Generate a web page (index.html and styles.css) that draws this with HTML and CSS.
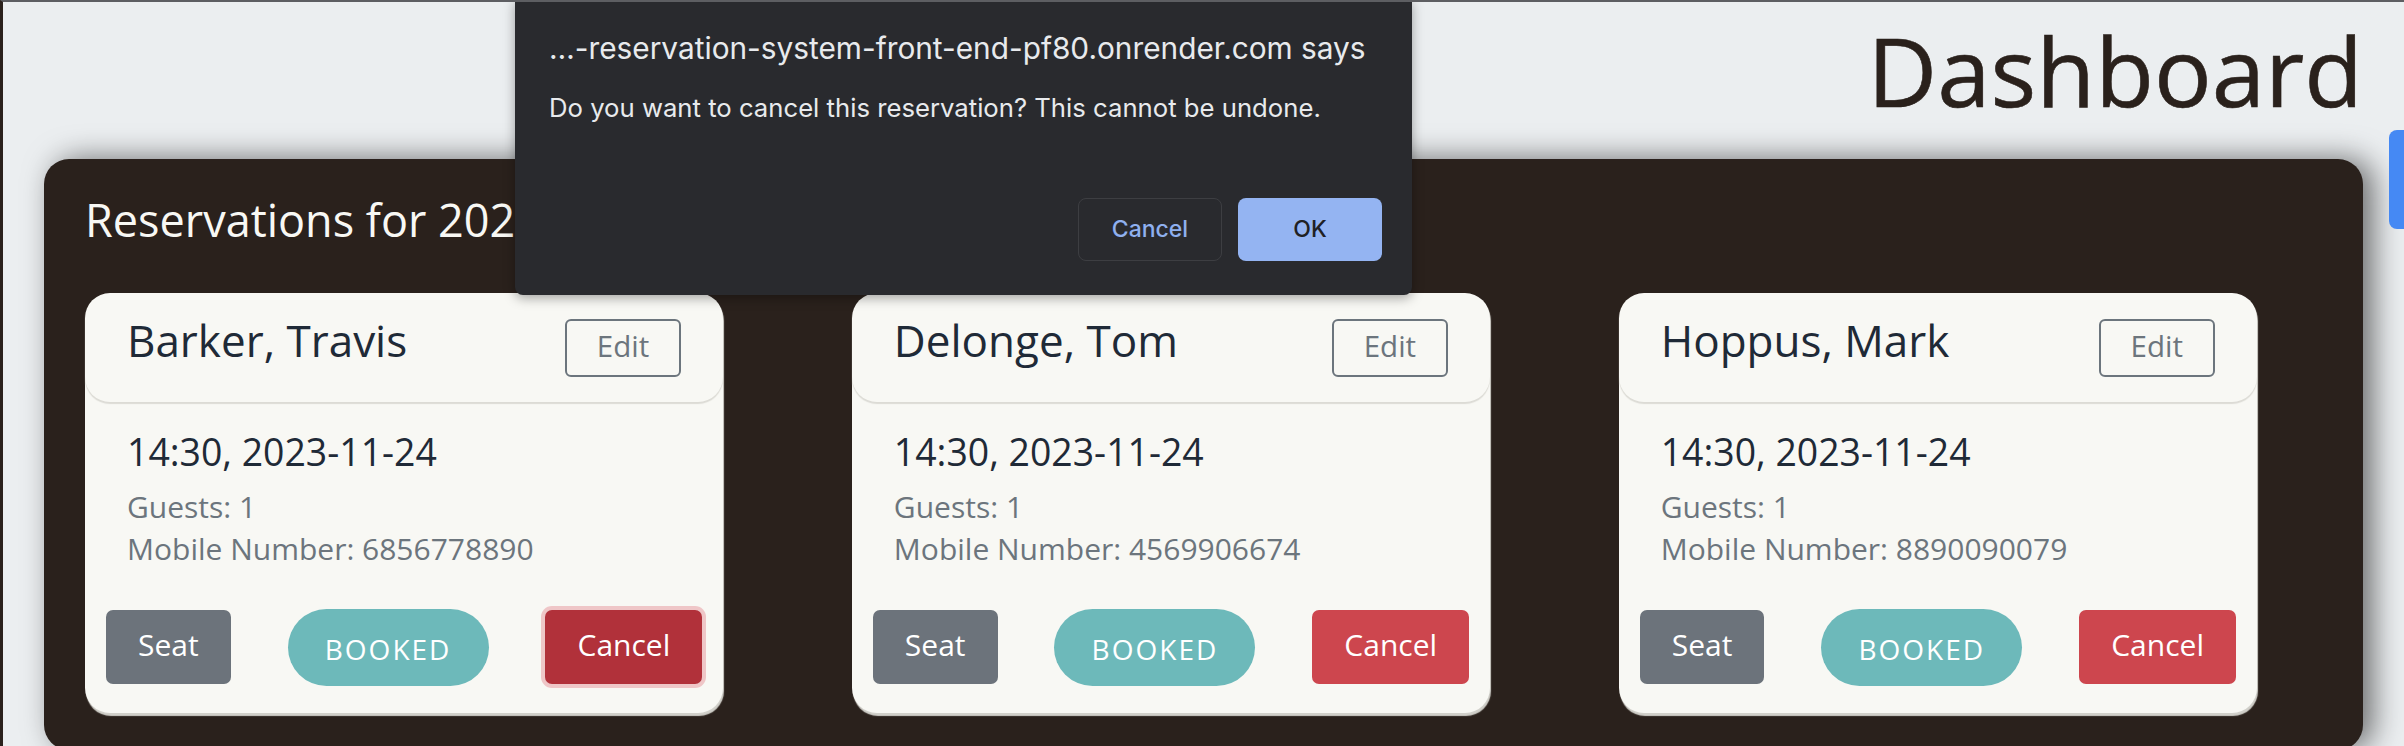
FILE: index.html
```html
<!DOCTYPE html>
<html lang="en">
<head>
<meta charset="utf-8">
<title>Dashboard</title>
<link rel="stylesheet" href="styles.css">
</head>
<body>
<main class="page">
  <h1 class="page-title">Dashboard</h1>
  <section class="panel">
    <h2 class="panel-title">Reservations for 2023-11-24</h2>
    <div class="cards">
      <article class="card">
        <header class="card-header">
          <h3 class="card-name">Barker, Travis</h3>
          <button class="btn-edit">Edit</button>
        </header>
        <div class="card-body">
          <p class="card-date">14:30, 2023-11-24</p>
          <p class="card-info">Guests: 1</p>
          <p class="card-info">Mobile Number: 6856778890</p>
        </div>
        <footer class="card-footer">
          <button class="btn btn-seat">Seat</button>
          <span class="status">BOOKED</span>
          <button class="btn btn-cancel is-active">Cancel</button>
        </footer>
      </article>
      <article class="card">
        <header class="card-header">
          <h3 class="card-name">Delonge, Tom</h3>
          <button class="btn-edit">Edit</button>
        </header>
        <div class="card-body">
          <p class="card-date">14:30, 2023-11-24</p>
          <p class="card-info">Guests: 1</p>
          <p class="card-info">Mobile Number: 4569906674</p>
        </div>
        <footer class="card-footer">
          <button class="btn btn-seat">Seat</button>
          <span class="status">BOOKED</span>
          <button class="btn btn-cancel">Cancel</button>
        </footer>
      </article>
      <article class="card">
        <header class="card-header">
          <h3 class="card-name">Hoppus, Mark</h3>
          <button class="btn-edit">Edit</button>
        </header>
        <div class="card-body">
          <p class="card-date">14:30, 2023-11-24</p>
          <p class="card-info">Guests: 1</p>
          <p class="card-info">Mobile Number: 8890090079</p>
        </div>
        <footer class="card-footer">
          <button class="btn btn-seat">Seat</button>
          <span class="status">BOOKED</span>
          <button class="btn btn-cancel">Cancel</button>
        </footer>
      </article>
    </div>
  </section>
</main>

<div class="side-tab"></div>

<div class="dialog" role="dialog">
  <p class="dialog-title">…-reservation-system-front-end-pf80.onrender.com says</p>
  <p class="dialog-message">Do you want to cancel this reservation? This cannot be undone.</p>
  <div class="dialog-actions">
    <button class="dialog-btn dialog-cancel">Cancel</button>
    <button class="dialog-btn dialog-ok">OK</button>
  </div>
</div>
</body>
</html>
```

FILE: styles.css
```css
* { box-sizing: border-box; }

html, body {
  margin: 0;
  height: 100%;
  overflow: hidden;
}

body {
  background: #ebeef0;
  border-top: 2px solid #5d5e62;
  border-left: 3px solid #2a211c;
  font-family: "Open Sans", "Noto Sans", sans-serif;
  position: relative;
}

.page {
  padding: 0 41px 0 41px;
}

.page-title {
  margin: 10.5px 0 33.5px;
  font-size: 96px;
  line-height: 113px;
  font-weight: 400;
  color: #2a211c;
  text-align: right;
  -webkit-text-stroke: 0.6px #2a211c;
}

.panel {
  background: #2a211c;
  border-radius: 25px;
  padding: 33.5px 106px 37px 41px;
  box-shadow: 10px 0 30px rgba(0, 0, 0, 0.55);
}

.panel-title {
  margin: 0 0 46.5px;
  font-size: 45px;
  line-height: 54px;
  font-weight: 400;
  color: #f8f8f4;
}

.cards {
  display: grid;
  grid-template-columns: repeat(3, 1fr);
  column-gap: 128.6px;
}

.card {
  background: #f8f8f4;
  border-radius: 25px;
  box-shadow: 1px 3px 1px #d1d0ca;
}

.card-header {
  display: flex;
  justify-content: space-between;
  align-items: flex-start;
  padding: 19.5px 42px 25px 42px;
  border-radius: 25px;
  box-shadow: 0 2px 1px #dcdbd5;
}

.card-name {
  margin: 0;
  font-size: 44px;
  line-height: 54px;
  font-weight: 400;
  color: #1f2a37;
}

.btn-edit {
  margin-top: 6.5px;
  height: 58px;
  padding: 0 30px 5px;
  display: flex;
  align-items: center;
  background: transparent;
  border: 2px solid #6c757d;
  border-radius: 6px;
  font-family: inherit;
  font-size: 29.5px;
  color: #6c757d;
}

.card-body {
  padding: 27.3px 42px 0;
}

.card-date {
  margin: 0 0 11px;
  font-size: 37.4px;
  line-height: 46px;
  color: #1f2a37;
}

.card-info {
  margin: 0;
  font-size: 30px;
  line-height: 42px;
  color: #6c757d;
}

.card-footer {
  display: flex;
  justify-content: space-between;
  align-items: center;
  padding: 38.6px 21px 27px;
}

.btn {
  height: 74px;
  padding: 0 32px 5px;
  display: flex;
  align-items: center;
  border: none;
  border-radius: 7px;
  font-family: inherit;
  font-size: 30px;
  color: #ffffff;
}

.btn-seat { background: #6c737b; }

.btn-cancel { background: #cd464e; }

.btn-cancel.is-active {
  background: #b1313a;
  box-shadow: 0 0 0 4px #efc6c7;
}

.status {
  width: 201px;
  height: 77px;
  padding-top: 3px;
  display: flex;
  align-items: center;
  justify-content: center;
  border-radius: 39px;
  background: #6db9ba;
  color: #ffffff;
  font-size: 28px;
  letter-spacing: 2px;
}

.side-tab {
  position: absolute;
  top: 128px;
  right: 0;
  width: 15px;
  height: 99px;
  background: #4589f4;
  border-radius: 8px 0 0 8px;
}

.dialog {
  position: absolute;
  top: -2px;
  left: 512px;
  width: 897px;
  height: 295px;
  padding: 0 30px 0 34px;
  background: #292a2e;
  border-radius: 0 0 8px 8px;
  box-shadow: 0 3px 12px rgba(0, 0, 0, 0.35);
  font-family: Inter, "Liberation Sans", sans-serif;
}

.dialog-title {
  margin: 0;
  padding-top: 30.5px;
  font-size: 29.8px;
  line-height: 34px;
  color: #e8eaed;
}

.dialog-message {
  margin: 28px 0 0;
  font-size: 25.7px;
  line-height: 30px;
  color: #e8eaed;
}

.dialog-actions {
  display: flex;
  justify-content: flex-end;
  gap: 16px;
  margin-top: 75px;
}

.dialog-btn {
  width: 144px;
  height: 63px;
  border-radius: 8px;
  font-family: inherit;
  font-size: 23px;
  font-weight: 500;
}

.dialog-cancel {
  background: transparent;
  border: 1px solid #3d3e42;
  color: #8fb0ef;
}

.dialog-ok {
  background: #94b4f2;
  border: none;
  color: #202124;
}
```
